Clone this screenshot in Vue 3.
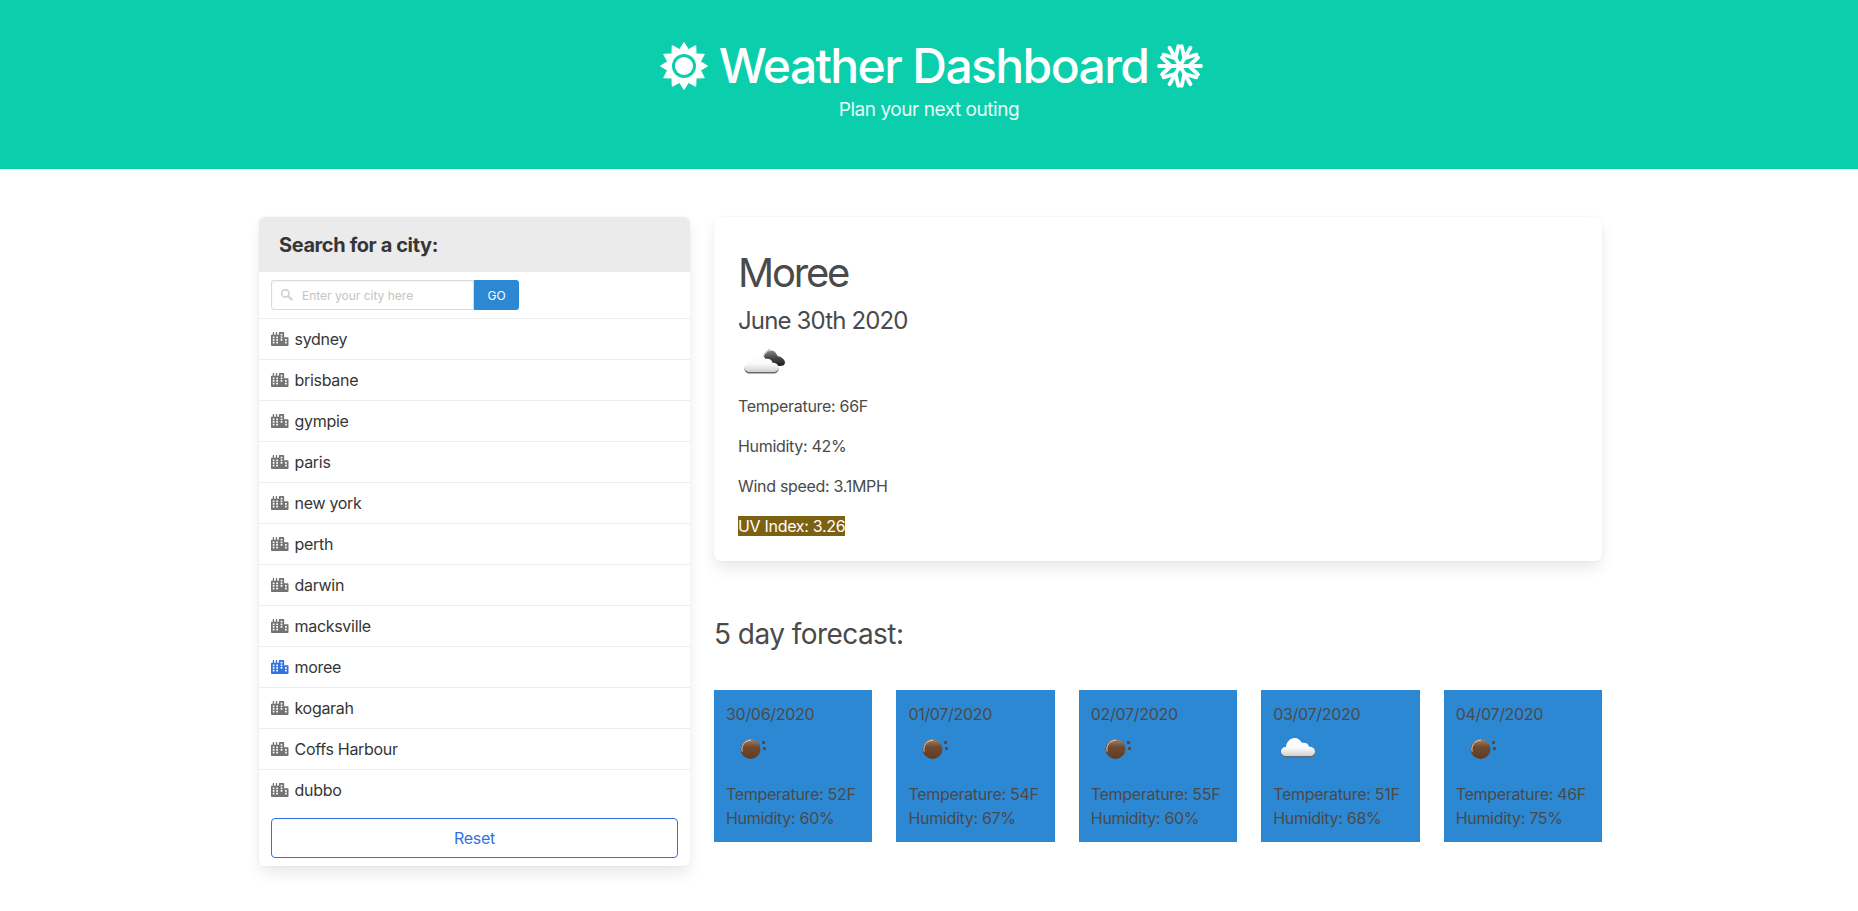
<template>
  <div class="page">
    <svg class="gradients" width="0" height="0" aria-hidden="true">
      <defs>
        <linearGradient id="cloudFill" x1="0" y1="0" x2="0" y2="1">
          <stop offset="0" stop-color="#ffffff" />
          <stop offset="0.55" stop-color="#fbfbfb" />
          <stop offset="1" stop-color="#cfcfcf" />
        </linearGradient>
        <linearGradient id="darkFill" x1="0" y1="0" x2="0" y2="1">
          <stop offset="0" stop-color="#8a8a8a" />
          <stop offset="0.45" stop-color="#4a4a4a" />
          <stop offset="1" stop-color="#1c1c1c" />
        </linearGradient>
        <linearGradient id="ballFill" x1="0" y1="0" x2="0" y2="1">
          <stop offset="0" stop-color="#a3826b" />
          <stop offset="0.4" stop-color="#6f4a30" />
          <stop offset="1" stop-color="#623a22" />
        </linearGradient>
      </defs>
    </svg>

    <section class="hero">
      <h1 class="hero-title">
        <svg class="hero-icon sun" viewBox="0 0 48 48">
          <path :d="sunPath" fill="#fff" stroke="#fff" stroke-width="1" stroke-linejoin="round" />
          <circle cx="24" cy="24" r="12" fill="#0bcfac" />
          <circle cx="24" cy="24" r="9" fill="#fff" />
        </svg>
        <span>Weather Dashboard</span>
        <svg class="hero-icon flake" viewBox="0 0 48 48">
          <g v-for="angle in [0, 60, 120, 180, 240, 300]" :key="angle" :transform="`rotate(${angle} 24 24)`"
            fill="none" stroke="#fff" stroke-width="3.8" stroke-linecap="round" stroke-linejoin="round">
            <path d="M24 24H45" />
            <path d="M42 15.5L33 24L42 32.5" />
          </g>
        </svg>
      </h1>
      <p class="hero-sub">Plan your next outing</p>
    </section>

    <div class="layout">
      <aside class="panel">
        <p class="panel-heading">Search for a city:</p>
        <form class="search" @submit.prevent>
          <div class="search-field">
            <svg class="search-icon" viewBox="0 0 16 16">
              <circle cx="6.6" cy="6.6" r="4.6" fill="none" stroke="#d0d0d0" stroke-width="2" />
              <path d="M10 10L14.5 14.5" stroke="#d0d0d0" stroke-width="2.4" stroke-linecap="round" />
            </svg>
            <input class="search-input" type="text" placeholder="Enter your city here" />
          </div>
          <button class="search-go" type="submit">GO</button>
        </form>
        <a v-for="city in cities" :key="city" class="city" :class="{ active: city === 'moree' }">
          <svg class="city-icon" viewBox="0 0 640 512">
            <path fill="currentColor" :d="cityPath" />
          </svg>
          {{ city }}
        </a>
        <div class="reset-row">
          <button class="reset" type="button">Reset</button>
        </div>
      </aside>

      <main class="content">
        <section class="today">
          <h2 class="today-city">Moree</h2>
          <p class="today-date">June 30th 2020</p>
          <svg class="weather-icon" viewBox="0 0 50 50">
            <path d="M25 21C26 15 30 11 34 11.5C37 12 38.5 14.5 39.5 17C42 17 47 20 47 23.5C47 26 45 27 42 27H30Z" fill="url(#darkFill)" />
            <path d="M25.5 18C26.5 14 29 11.5 32 10.5" fill="none" stroke="#9a9a9a" stroke-width="1" />
            <g transform="translate(-1.5 3)">
              <path :d="cloudPath" transform="translate(0 1.4)" fill="#6a6a6a" />
              <path :d="cloudPath" fill="url(#cloudFill)" />
            </g>
          </svg>
          <p class="today-line">Temperature: 66F</p>
          <p class="today-line">Humidity: 42%</p>
          <p class="today-line">Wind speed: 3.1MPH</p>
          <p class="today-line last"><span class="uv">UV Index: 3.26</span></p>
        </section>

        <h2 class="forecast-title">5 day forecast:</h2>
        <div class="forecast">
          <article v-for="day in forecast" :key="day.date" class="day">
            <p>{{ day.date }}</p>
            <svg class="weather-icon" viewBox="0 0 50 50">
              <template v-if="day.icon === 'cloud'">
                <path :d="cloudPath" transform="translate(0 1.4)" fill="#5f6a72" />
                <path :d="cloudPath" fill="url(#cloudFill)" />
              </template>
              <template v-else>
                <circle cx="24.5" cy="23" r="10" fill="url(#ballFill)" />
                <path d="M16.2 25.5A8.8 8.8 0 0 1 25 14.3" fill="none" stroke="#e6cdbb" stroke-width="1" />
                <rect x="36" y="15" width="3" height="3" fill="#70452f" />
                <rect x="37" y="21" width="3" height="3" fill="#70452f" />
              </template>
            </svg>
            <p>Temperature: {{ day.temp }}F</p>
            <p>Humidity: {{ day.humidity }}%</p>
          </article>
        </div>
      </main>
    </div>
  </div>
</template>

<script setup>
const cities = ['sydney', 'brisbane', 'gympie', 'paris', 'new york', 'perth', 'darwin', 'macksville', 'moree', 'kogarah', 'Coffs Harbour', 'dubbo']

const forecast = [
  { date: '30/06/2020', icon: 'ball', temp: 52, humidity: 60 },
  { date: '01/07/2020', icon: 'ball', temp: 54, humidity: 67 },
  { date: '02/07/2020', icon: 'ball', temp: 55, humidity: 60 },
  { date: '03/07/2020', icon: 'cloud', temp: 51, humidity: 68 },
  { date: '04/07/2020', icon: 'ball', temp: 46, humidity: 75 }
]

// 12 pointed star behind the sun disc
const sunPath = Array.from({ length: 24 }, (_, i) => {
  const a = (i * Math.PI) / 12 - Math.PI / 2
  const r = i % 2 === 0 ? 23.5 : 17
  return `${i === 0 ? 'M' : 'L'}${(24 + r * Math.cos(a)).toFixed(2)} ${(24 + r * Math.sin(a)).toFixed(2)}`
}).join('') + 'Z'

const cloudPath = 'M13 30C9.5 30 8 27.5 8 25.5C8 22.8 10 21 12.8 21C13.5 16 17 12 21.5 12C25 12 27.5 14 29 17C32 16 35.5 17.5 36 20.8C39.5 20.8 42 22.8 42 25.5C42 28 40 30 37 30Z'

const cityPath = 'M616 192H480V24c0-13.26-10.74-24-24-24H312c-13.26 0-24 10.74-24 24v72h-64V16c0-8.84-7.16-16-16-16h-16c-8.84 0-16 7.16-16 16v80h-64V16c0-8.84-7.16-16-16-16H80c-8.84 0-16 7.16-16 16v80H24c-13.26 0-24 10.74-24 24v360c0 17.67 14.33 32 32 32h576c17.67 0 32-14.33 32-32V216c0-13.26-10.75-24-24-24zM128 404c0 6.63-5.37 12-12 12H76c-6.63 0-12-5.37-12-12v-40c0-6.63 5.37-12 12-12h40c6.63 0 12 5.37 12 12v40zm0-96c0 6.63-5.37 12-12 12H76c-6.63 0-12-5.37-12-12v-40c0-6.63 5.37-12 12-12h40c6.63 0 12 5.37 12 12v40zm0-96c0 6.63-5.37 12-12 12H76c-6.63 0-12-5.37-12-12v-40c0-6.63 5.37-12 12-12h40c6.63 0 12 5.37 12 12v40zm128 192c0 6.63-5.37 12-12 12h-40c-6.63 0-12-5.37-12-12v-40c0-6.63 5.37-12 12-12h40c6.63 0 12 5.37 12 12v40zm0-96c0 6.63-5.37 12-12 12h-40c-6.63 0-12-5.37-12-12v-40c0-6.63 5.37-12 12-12h40c6.63 0 12 5.37 12 12v40zm0-96c0 6.63-5.37 12-12 12h-40c-6.63 0-12-5.37-12-12v-40c0-6.63 5.37-12 12-12h40c6.63 0 12 5.37 12 12v40zm160 96c0 6.63-5.37 12-12 12h-40c-6.63 0-12-5.37-12-12v-40c0-6.63 5.37-12 12-12h40c6.63 0 12 5.37 12 12v40zm0-96c0 6.63-5.37 12-12 12h-40c-6.63 0-12-5.37-12-12v-40c0-6.63 5.37-12 12-12h40c6.63 0 12 5.37 12 12v40zm0-96c0 6.63-5.37 12-12 12h-40c-6.63 0-12-5.37-12-12V76c0-6.63 5.37-12 12-12h40c6.63 0 12 5.37 12 12v40zm160 288c0 6.63-5.37 12-12 12h-40c-6.63 0-12-5.37-12-12v-40c0-6.63 5.37-12 12-12h40c6.63 0 12 5.37 12 12v40zm0-96c0 6.63-5.37 12-12 12h-40c-6.63 0-12-5.37-12-12v-40c0-6.63 5.37-12 12-12h40c6.63 0 12 5.37 12 12v40z'
</script>

<style scoped>
.page {
  font-family: Inter, "Liberation Sans", sans-serif;
  font-size: 16px;
  line-height: 24px;
  letter-spacing: -0.3px;
  color: #4a4a4a;
  padding-bottom: 45px;
}

.gradients {
  display: block;
}

p,
h1,
h2 {
  margin: 0;
  font-weight: 400;
}

.hero {
  height: 169px;
  padding-top: 36px;
  box-sizing: border-box;
  background: #0bcfac;
  color: #fff;
  text-align: center;
}

.hero-title {
  display: flex;
  justify-content: center;
  align-items: center;
  padding-left: 6px;
  font-size: 48px;
  font-weight: 500;
  line-height: 60px;
  letter-spacing: -1.6px;
}

.hero-icon {
  width: 48px;
  height: 48px;
}

.hero-icon.sun {
  margin-right: 11px;
}

.hero-icon.flake {
  margin-left: 8px;
}

.hero-sub {
  font-size: 19px;
  line-height: 30px;
  letter-spacing: -0.45px;
  opacity: 0.9;
  margin-top: -1px;
}

.layout {
  display: flex;
  gap: 24px;
  width: 1343px;
  margin: 48px 0 0 259px;
}

.panel {
  flex: 0 0 431px;
  align-self: flex-start;
  border-radius: 6px;
  background: #fff;
  box-shadow: 0 8px 16px -2px rgba(10, 10, 10, 0.1), 0 0 0 1px rgba(10, 10, 10, 0.02);
  overflow: hidden;
}

.panel-heading {
  padding: 16px 20px 14px;
  background: #ebebeb;
  color: #363636;
  font-size: 20px;
  font-weight: 700;
  line-height: 25px;
  letter-spacing: -0.4px;
}

.search {
  display: flex;
  padding: 8px 12px;
  border-bottom: 1px solid #ededed;
}

.search-field {
  position: relative;
  width: 203px;
}

.search-icon {
  position: absolute;
  left: 9px;
  top: 8px;
  width: 13px;
  height: 13px;
}

.search-input {
  display: block;
  width: 100%;
  height: 30px;
  box-sizing: border-box;
  padding: 0 8px 0 30px;
  border: 1px solid #dbdbdb;
  border-radius: 3px 0 0 3px;
  outline: none;
  font-family: inherit;
  font-size: 12px;
  box-shadow: inset 0 1px 2px rgba(10, 10, 10, 0.05);
}

.search-input::placeholder {
  color: #c4c4c4;
}

.search-go {
  width: 45px;
  height: 30px;
  border: 0;
  border-radius: 0 3px 3px 0;
  background: #2d88d3;
  color: #fff;
  font-family: inherit;
  font-size: 12px;
}

.city {
  display: flex;
  align-items: center;
  gap: 6px;
  height: 40px;
  padding: 0 12px;
  color: #363636;
  border-bottom: 1px solid #ededed;
}

.city:nth-last-child(2) {
  border-bottom: 0;
}

.city-icon {
  width: 17.5px;
  height: 14px;
  color: #737373;
}

.city.active .city-icon {
  color: #3273dc;
}

.reset-row {
  padding: 8px 12px;
}

.reset {
  display: block;
  width: 100%;
  height: 40px;
  border: 1px solid #3273dc;
  border-radius: 4px;
  background: #fff;
  color: #3273dc;
  font-family: inherit;
  font-size: 16px;
  letter-spacing: -0.3px;
}

.content {
  flex: 0 0 888px;
}

.today {
  padding: 26px 24px 23px;
  border-radius: 6px;
  background: #fff;
  box-shadow: 0 8px 16px -2px rgba(10, 10, 10, 0.1), 0 0 0 1px rgba(10, 10, 10, 0.02);
}

.today-city {
  font-size: 40px;
  line-height: 60px;
  letter-spacing: -2.2px;
}

.today-date {
  font-size: 24px;
  line-height: 36px;
  letter-spacing: -0.85px;
}

.weather-icon {
  display: block;
  width: 50px;
  height: 50px;
  margin-bottom: 6px;
}

.today .weather-icon {
  margin-bottom: 5px;
}

.today-line {
  margin-bottom: 16px;
}

.today-line.last {
  margin-bottom: 0;
}

.uv {
  background: #7d6112;
  color: #fff;
}

.forecast-title {
  margin: 52px 0 35px;
  font-size: 28px;
  line-height: 42px;
  letter-spacing: -0.55px;
}

.forecast {
  display: flex;
  gap: 24px;
}

.day {
  flex: 1;
  min-width: 0;
  padding: 12px;
  background: #2d88d3;
  white-space: nowrap;
}
</style>

<style>
html,
body {
  background: #fff;
}
</style>
